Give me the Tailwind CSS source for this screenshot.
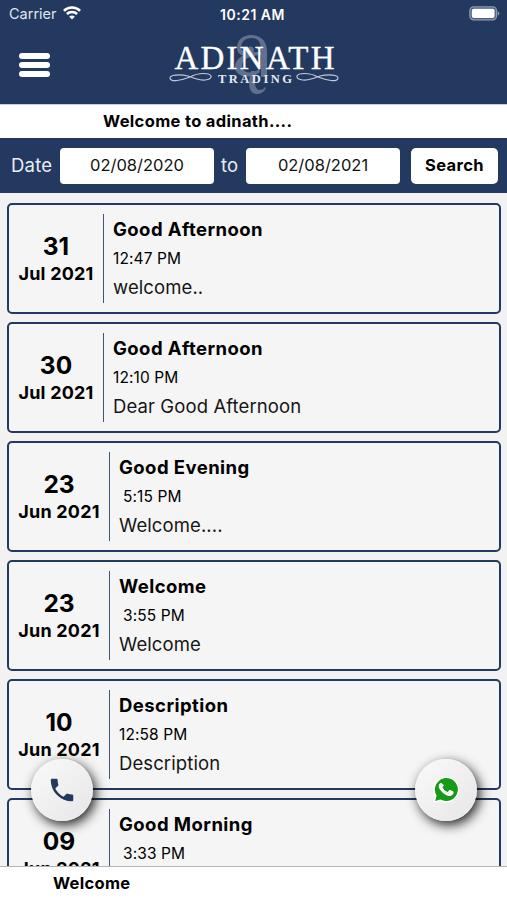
<!DOCTYPE html>
<html lang="en">
<head>
  <meta charset="UTF-8" />
  <title>Adinath Trading</title>
  <meta name="viewport" content="width=device-width, initial-scale=1.0"/>
  <script src="https://cdn.jsdelivr.net/npm/@tailwindcss/browser@4"></script>
</head>
<body class="bg-[#f2f2f3] font-['Inter',sans-serif] text-black">
  <div class="relative flex h-[900px] w-[507px] flex-col overflow-hidden">

    <!-- Header -->
    <header class="h-[104px] shrink-0 bg-[#24395f] text-white">
      <div class="grid h-7 grid-cols-3 items-center pr-[7px] pl-[9px]">
        <div class="flex items-center gap-1.5 text-[14.5px] text-[#dfe6f0]">
          <span>Carrier</span>
          <svg class="-mt-0.5 h-[14px] w-[18px]" viewBox="0 0 18 14" fill="none" stroke="#fff" stroke-width="2.5">
            <path d="M.9 4.9a11.5 11.5 0 0 1 16.2 0"/>
            <path d="M3.9 8a7.3 7.3 0 0 1 10.2 0"/>
            <path d="M9 13.6 6.2 10.8a4 4 0 0 1 5.6 0z" fill="#fff" stroke="none"/>
          </svg>
        </div>
        <div class="-ml-1 text-center text-[14px] font-semibold tracking-[0.5px] whitespace-nowrap">10:21 AM</div>
        <svg class="-mt-0.5 h-[15px] w-[31px] justify-self-end" viewBox="0 0 31 15">
          <rect x=".9" y=".9" width="26.6" height="13" rx="3.8" fill="#4a5d7f" stroke="#8e9bb1" stroke-width="1.3"/>
          <rect x="2.8" y="2.8" width="22.8" height="9.2" rx="2" fill="#fff"/>
          <path d="M28.7 5.2c2.2.8 2.2 3.6 0 4.4z" fill="#8e9bb1"/>
        </svg>
      </div>
      <div class="flex h-[76px] items-start pt-1 pl-[19px]">
        <button class="mt-[21px] flex w-[31px] flex-col gap-[3px]">
          <span class="h-1.5 rounded-[3px] bg-white"></span>
          <span class="h-1.5 rounded-[3px] bg-white"></span>
          <span class="h-1.5 rounded-[3px] bg-white"></span>
        </button>
        <svg class="ml-[115px] h-[66px] w-[180px]" viewBox="165 32 180 66" fill="none">
          <g fill="#5f7090">
            <path d="M237 48c0-8 6-13 14-13 10 0 16 6 16 16v26h-6V50c0-8-3-12-9-12-7 0-11 4-11 10 0 3 4 4 6 1 2-4 7-3 7 1 0 6-8 8-13 5-3-2-4-4-4-7z"/>
            <path d="M262 55c-9 0-20 3-20 11 0 7 10 9 17 3l1 3c-10 8-25 5-25-5 0-11 15-16 27-15z"/>
            <path d="M251 71h6c-3 8-3 18 2 19 3 0 5-1 6-3l1 1c-2 4-5 6-9 6-9 0-9-11-6-23z"/>
          </g>
          <g fill="#fff" font-family="'Liberation Serif', serif">
            <text x="174.500" y="69" font-size="33" stroke="#fff" stroke-width=".35" textLength="160" lengthAdjust="spacing">ADINATH</text>
            <text x="218" y="83" font-size="12.5" font-weight="bold" fill="#e4eaf2" textLength="74" lengthAdjust="spacing">TRADING</text>
          </g>
          <g stroke="#bfcad9" stroke-width="1.2" stroke-linecap="round">
            <path d="M188 76c-9-2-18-1-18 2 0 5 12 2 20-1 9-5 20-4 21-1 1 4-8 5-14 3-4-1-6-2-9-3"/>
            <path d="M320 76c9-2 18-1 18 2 0 5-12 2-20-1-9-5-20-4-21-1-1 4 8 5 14 3 4-1 6-2 9-3"/>
          </g>
        </svg>
      </div>
    </header>

    <div class="h-[34px] shrink-0 border-t border-[#c9cdd6] bg-white pl-[103px] text-[16.5px] leading-[33px] font-bold tracking-[0.34px]">Welcome to adinath....</div>

    <!-- Date filter -->
    <div class="flex h-[55px] shrink-0 items-center bg-[#24395f] pl-[11px]">
      <span class="w-[49px] text-[18.5px] tracking-[0.2px] text-[#e9eef6]">Date</span>
      <div class="flex h-9 w-[154px] items-center justify-center rounded-[4px] bg-white text-[16.5px] text-[#111]">02/08/2020</div>
      <span class="w-8 pr-px text-center text-[18.5px] text-[#e9eef6]">to</span>
      <div class="flex h-9 w-[154px] items-center justify-center rounded-[4px] bg-white text-[16.5px] text-[#111]">02/08/2021</div>
      <button class="ml-[11px] h-9 w-[87px] rounded-[5px] bg-white text-[16.5px] font-bold tracking-[0.4px]">Search</button>
    </div>

    <!-- Messages -->
    <main class="flex min-h-0 flex-1 flex-col gap-2 overflow-hidden pt-[10px] pr-[6px] pl-[7px]">
      <article class="flex h-[111px] shrink-0 rounded-[5px] border-2 border-[#24395f] bg-[#f5f5f5] py-[9px]">
        <div class="flex w-[95px] flex-col items-center justify-center border-r border-[#3f5579] pt-[3px] font-bold">
          <div class="text-[24.5px] leading-7">31</div>
          <div class="text-[18px] leading-7 tracking-[0.2px]">Jul 2021</div>
        </div>
        <div class="pt-px pl-[9px] leading-[29px]">
          <h2 class="text-[18.5px] font-bold tracking-[0.44px]">Good Afternoon</h2>
          <p class="text-[15.5px] tracking-[0.1px]">12:47 PM</p>
          <p class="text-[18.5px] tracking-[0.1px] text-[#151515]">welcome..</p>
        </div>
      </article>
      <article class="flex h-[111px] shrink-0 rounded-[5px] border-2 border-[#24395f] bg-[#f5f5f5] py-[9px]">
        <div class="flex w-[95px] flex-col items-center justify-center border-r border-[#3f5579] pt-[3px] font-bold">
          <div class="text-[24.5px] leading-7">30</div>
          <div class="text-[18px] leading-7 tracking-[0.2px]">Jul 2021</div>
        </div>
        <div class="pt-px pl-[9px] leading-[29px]">
          <h2 class="text-[18.5px] font-bold tracking-[0.44px]">Good Afternoon</h2>
          <p class="text-[15.5px] tracking-[0.1px]">12:10 PM</p>
          <p class="text-[18.5px] tracking-[0.1px] text-[#151515]">Dear Good Afternoon</p>
        </div>
      </article>
      <article class="flex h-[111px] shrink-0 rounded-[5px] border-2 border-[#24395f] bg-[#f5f5f5] py-[9px]">
        <div class="flex w-[101px] flex-col items-center justify-center border-r border-[#3f5579] pt-[3px] font-bold">
          <div class="text-[24.5px] leading-7">23</div>
          <div class="text-[18px] leading-7 tracking-[0.2px]">Jun 2021</div>
        </div>
        <div class="pt-px pl-[9px] leading-[29px]">
          <h2 class="text-[18.5px] font-bold tracking-[0.44px]">Good Evening</h2>
          <p class="pl-1 text-[15.5px] tracking-[0.1px]">5:15 PM</p>
          <p class="text-[18.5px] tracking-[0.1px] text-[#151515]">Welcome....</p>
        </div>
      </article>
      <article class="flex h-[111px] shrink-0 rounded-[5px] border-2 border-[#24395f] bg-[#f5f5f5] py-[9px]">
        <div class="flex w-[101px] flex-col items-center justify-center border-r border-[#3f5579] pt-[3px] font-bold">
          <div class="text-[24.5px] leading-7">23</div>
          <div class="text-[18px] leading-7 tracking-[0.2px]">Jun 2021</div>
        </div>
        <div class="pt-px pl-[9px] leading-[29px]">
          <h2 class="text-[18.5px] font-bold tracking-[0.44px]">Welcome</h2>
          <p class="pl-1 text-[15.5px] tracking-[0.1px]">3:55 PM</p>
          <p class="text-[18.5px] tracking-[0.1px] text-[#151515]">Welcome</p>
        </div>
      </article>
      <article class="flex h-[111px] shrink-0 rounded-[5px] border-2 border-[#24395f] bg-[#f5f5f5] py-[9px]">
        <div class="flex w-[101px] flex-col items-center justify-center border-r border-[#3f5579] pt-[3px] font-bold">
          <div class="text-[24.5px] leading-7">10</div>
          <div class="text-[18px] leading-7 tracking-[0.2px]">Jun 2021</div>
        </div>
        <div class="pt-px pl-[9px] leading-[29px]">
          <h2 class="text-[18.5px] font-bold tracking-[0.44px]">Description</h2>
          <p class="text-[15.5px] tracking-[0.1px]">12:58 PM</p>
          <p class="text-[18.5px] tracking-[0.1px] text-[#151515]">Description</p>
        </div>
      </article>
      <article class="flex h-[111px] shrink-0 rounded-[5px] border-2 border-[#24395f] bg-[#f5f5f5] py-[9px]">
        <div class="flex w-[101px] flex-col items-center justify-center border-r border-[#3f5579] pt-[3px] font-bold">
          <div class="text-[24.5px] leading-7">09</div>
          <div class="text-[18px] leading-7 tracking-[0.2px]">Jun 2021</div>
        </div>
        <div class="pt-px pl-[9px] leading-[29px]">
          <h2 class="text-[18.5px] font-bold tracking-[0.44px]">Good Morning</h2>
          <p class="pl-1 text-[15.5px] tracking-[0.1px]">3:33 PM</p>
        </div>
      </article>
    </main>

    <footer class="h-[34px] shrink-0 border-t border-[#b5b5b5] bg-white pl-[53px] text-[16.5px] leading-[33px] font-bold tracking-[0.3px]">Welcome</footer>

    <!-- Floating buttons -->
    <button class="absolute top-[759px] left-[31px] flex size-[62px] items-center justify-center rounded-full bg-linear-to-br from-[#fafafa] to-[#e6e6e6] shadow-[3px_4px_12px_rgba(0,0,0,0.85)]">
      <svg class="size-[30px]" viewBox="0 0 24 24" fill="#24395f">
        <path d="M6.62 10.79a15.15 15.15 0 0 0 6.59 6.59l2.2-2.2a1 1 0 0 1 1.02-.24c1.12.37 2.33.57 3.57.57a1 1 0 0 1 1 1V20a1 1 0 0 1-1 1A17 17 0 0 1 3 4a1 1 0 0 1 1-1h3.5a1 1 0 0 1 1 1c0 1.25.2 2.45.57 3.57a1 1 0 0 1-.25 1.02z"/>
      </svg>
    </button>
    <button class="absolute top-[759px] left-[415px] flex size-[62px] items-center justify-center rounded-full bg-linear-to-br from-[#fafafa] to-[#e6e6e6] shadow-[3px_4px_12px_rgba(0,0,0,0.85)]">
      <svg class="size-7" viewBox="0 0 28 28">
        <path d="M1 27 2.8 20.5A13 13 0 1 1 7.8 25.2z" fill="#fff"/>
        <path d="M3.2 24.9 4.6 19.7A11.500 11.500 0 1 1 8.500 23.500z" fill="#169b16"/>
        <path d="M10.2 7.9c-.4-.8-.8-.8-1.3-.8-1.1 0-2.2 1.4-2.2 3.1 0 1.5 1.1 3.1 2 4.2 2 2.6 4.3 4.4 7.3 5.4 2.4.8 5.6-.6 5.600-3.5 0-.5-.3-.7-.8-1l-2.6-1.3c-.5-.2-.8-.1-1.1.3l-1.1 1.4c-.3.3-.6.3-1 .1-2-.9-3.4-2.3-4.4-4.1-.2-.4-.1-.7.2-1l.8-1c.2-.3.2-.6.1-.9z" fill="#fff"/>
      </svg>
    </button>
  </div>
</body>
</html>
